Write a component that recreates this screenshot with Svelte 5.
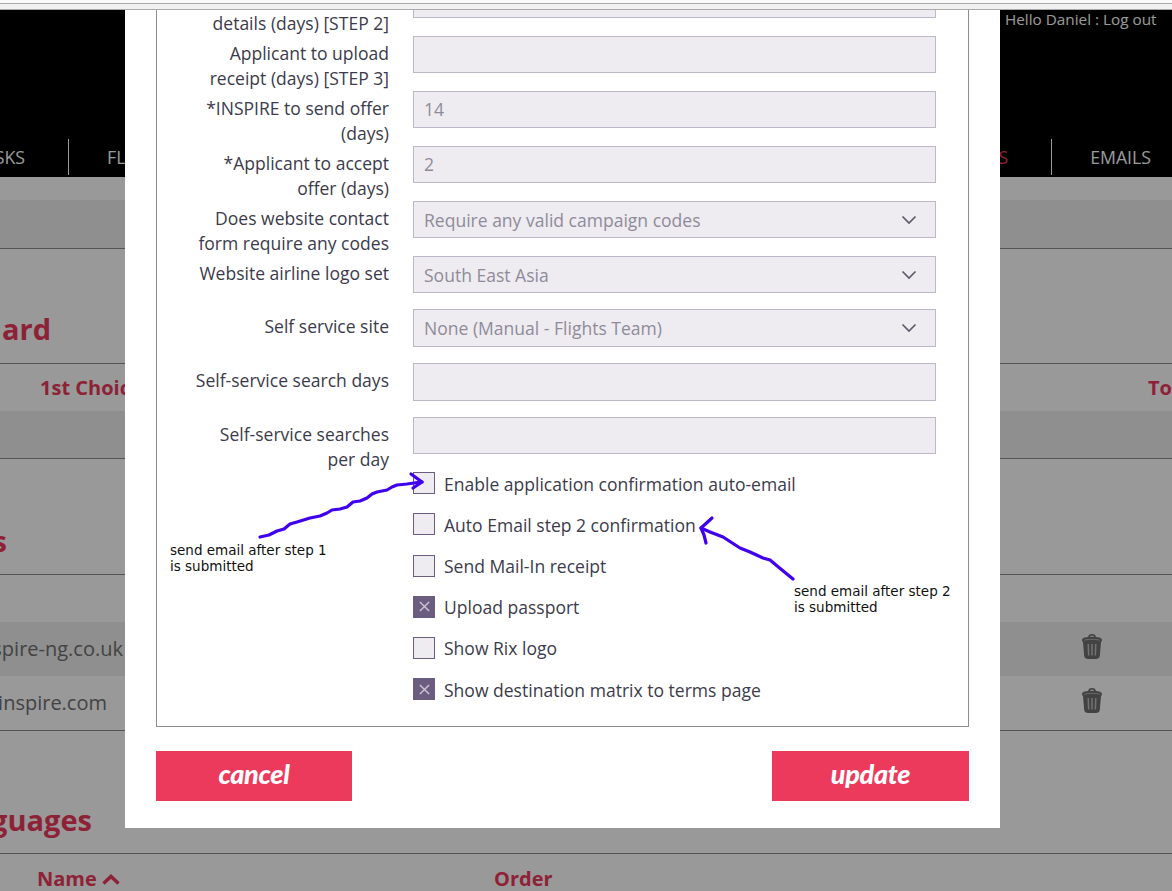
<script>
  const textRows = [
    { label: 'Applicant to provide details (days) [STEP 2]', value: '' },
    { label: 'Applicant to upload receipt (days) [STEP 3]', value: '' },
    { label: '*INSPIRE to send offer (days)', value: '14' },
    { label: '*Applicant to accept offer (days)', value: '2' }
  ];
  const checks = [
    { label: 'Enable application confirmation auto-email', on: false },
    { label: 'Auto Email step 2 confirmation', on: false },
    { label: 'Send Mail-In receipt', on: false },
    { label: 'Upload passport', on: true },
    { label: 'Show Rix logo', on: false },
    { label: 'Show destination matrix to terms page', on: true }
  ];
</script>

{#snippet trash()}
  <svg class="trash" viewBox="0 0 20 25" aria-hidden="true">
    <path d="M7 3.2C7 1.4 8.3.8 10 .8s3 .6 3 2.4" fill="none" stroke="currentColor" stroke-width="1.6" />
    <path d="M0 6.2C0 3.8 4 2.8 10 2.8s10 1 10 3.4c0 .8-.4 1.4-1 1.8L17.8 22c-.2 2-2 3-3.8 3H6c-1.8 0-3.6-1-3.800-3L1 8c-.6-.4-1-1-1-1.800z" fill="currentColor" />
    <path d="M2 6.400C4 5 16 5 18 6.400" fill="none" stroke="#fff" stroke-opacity=".45" stroke-width="1" />
    <path d="M6.200 10l.5 11.500M10 10v11.500M13.800 10l-.5 11.500" fill="none" stroke="#fff" stroke-opacity=".55" stroke-width="1.500" />
  </svg>
{/snippet}

{#snippet selectField(value, tall)}
  <div class="select-wrap">
    <select class="field" class:tall><option>{value}</option></select>
    <svg class="chev" viewBox="0 0 16 10" aria-hidden="true"><path d="M1.500 1.500 8 8l6.500-6.500" fill="none" stroke="#5d5b69" stroke-width="1.700" /></svg>
  </div>
{/snippet}

<div class="root">
  <div class="strip"></div>
  <div class="viewport">
    <header class="head">
      <div class="hello">Hello Daniel : Log out</div>
      <nav class="nav">
        <div class="nav-first"><span>TASKS</span></div>
        <div class="nav-item">FLIGHTS</div>
        <div class="nav-item active">CAMPAIGNS</div>
        <div class="nav-item last">EMAILS</div>
      </nav>
    </header>

    <div class="band ruled"></div>

    <h2 class="title t1"><span>ard</span></h2>
    <div class="cols cols-a ruled-top"><b>1st Choice</b><b>Total</b></div>
    <div class="band short ruled"></div>

    <h2 class="title t2"><span>Emails</span></h2>
    <div class="cols empty ruled-top"></div>
    <div class="row stripe"><span class="addr"><span>admin@inspire-ng.co.uk</span></span>{@render trash()}</div>
    <div class="row ruled"><span class="addr two"><span>info@inspire.com</span></span>{@render trash()}</div>

    <h2 class="title t3"><span>Languages</span></h2>
    <div class="cols cols-b ruled-top">
      <b class="name">Name<svg viewBox="0 0 18 11" aria-hidden="true"><path d="M1.500 9.500 9 2.500l7.500 7" fill="none" stroke="currentColor" stroke-width="3.500" /></svg></b>
      <b>Order</b>
    </div>

    <div class="overlay"></div>

    <div class="modal">
      <form class="panel">
        {#each textRows as r}
          <div class="frow">
            <label class="lab">{r.label}</label>
            <input class="field" value={r.value} />
          </div>
        {/each}
        <div class="frow">
          <label class="lab">Does website contact form require any codes</label>
          {@render selectField('Require any valid campaign codes', false)}
        </div>
        <div class="frow">
          <label class="lab">Website airline logo set</label>
          {@render selectField('South East Asia', false)}
        </div>
        <div class="frow">
          <label class="lab">Self service site</label>
          {@render selectField('None (Manual - Flights Team)', true)}
        </div>
        <div class="frow">
          <label class="lab">Self-service search days</label>
          <input class="field tall" />
        </div>
        <div class="frow">
          <label class="lab">Self-service searches per day</label>
          <input class="field" />
        </div>
        <div class="checks">
          {#each checks as c}
            <div class="check">
              <span class="box" class:on={c.on}>
                {#if c.on}
                  <svg viewBox="0 0 12 12" aria-hidden="true"><path d="M1 1l10 10M11 1 1 11" stroke="#c9c5d3" stroke-width="1.600" fill="none" /></svg>
                {/if}
              </span>
              <span class="check-text">{c.label}</span>
            </div>
          {/each}
        </div>
      </form>
      <div class="actions">
        <button type="button" class="btn">cancel</button>
        <button type="button" class="btn">update</button>
      </div>
    </div>
  </div>

  <svg class="ink" viewBox="0 0 1172 891" aria-hidden="true">
    <polyline points="260,537 269,535 277,531 284,529 290,524 297,522 310,518 320,516 327,513 332,510 340,509 347,507 353,502 360,501 367,498 372,494 377,492 387,490 392,487 397,485 407,484 414,483 422,482" />
    <polyline points="411,474 422,482 413,488" />
    <polyline points="793,579 782,570 770,560 763,558 750,552 740,548 723,537 710,532 701,528" />
    <polyline points="712,518 701,528 704,535 706,543" />
  </svg>
  <div class="note n1">send email after step 1<br />is submitted</div>
  <div class="note n2">send email after step 2<br />is submitted</div>
</div>

<style>
  :global(body) { margin: 0; background: #fff; }
  .root {
    position: relative; width: 1172px; height: 891px; overflow: hidden;
    font-family: "Open Sans", sans-serif; color: #3c3b4b;
  }
  .strip {
    height: 10px; box-sizing: border-box; background: #f1f1f1;
    border-top: 3px solid #fafafa; border-bottom: 1px solid #aaa; position: relative;
  }
  .strip::before { content: ""; display: block; height: 1px; background: #aaa; }
  .viewport { position: relative; height: 881px; overflow: hidden; background: #fff; }

  .head { position: relative; height: 167px; background: #000; display: flex; flex-direction: column; justify-content: flex-end; }
  .hello { position: absolute; top: 0; left: 1005px; font-size: 15.300px; line-height: 18px; color: #fff; white-space: nowrap; }
  .nav { display: flex; height: 38px; color: #fff; font-size: 17.700px; line-height: 36px; }
  .nav-first { width: 68px; flex: none; display: flex; justify-content: flex-end; height: 36px; border-right: 1px solid #fff; padding-right: 43px; box-sizing: content-box; margin-left: -43px; }
  .nav-item { padding: 0 38px; height: 36px; white-space: nowrap; }
  .nav-item.active { margin-left: auto; color: #ec3a5d; padding-right: 43px; }
  .nav-item.last { border-left: 1px solid #fff; padding-right: 21px; }

  .band { height: 48px; background: #eee; }
  .band.short { height: 47px; }
  .head + .band { margin-top: 23px; }
  .ruled { border-bottom: 1px solid #8e8e8e; }
  .ruled-top { border-top: 1px solid #8e8e8e; }

  .title { margin: 0; width: 51px; display: flex; justify-content: flex-end; font-size: 29px; line-height: 40px; font-weight: 700; color: #ec3a5d; white-space: nowrap; }
  .t1 { margin-top: 60px; margin-bottom: 14px; }
  .t2 { margin-top: 62px; margin-bottom: 13px; width: 7px; }
  .t3 { margin-top: 69px; margin-bottom: 13px; width: 92px; }

  .cols { height: 47px; font-size: 20px; line-height: 47px; color: #ec3a5d; white-space: nowrap; display: grid; }
  .cols b { font-weight: 700; }
  .cols-a { grid-template-columns: 1108px 100px; padding-left: 40px; }
  .cols-b { grid-template-columns: 457px 1fr; padding-left: 37px; line-height: 49px; }
  .name { display: flex; align-items: center; gap: 5px; height: 49px; }
  .name svg { width: 18px; height: 11px; margin-top: 2px; }

  .row { height: 54px; display: flex; align-items: center; font-size: 20px; color: #707070; position: relative; }
  .stripe { background: #eee; }
  .addr { width: 123px; display: flex; justify-content: flex-end; white-space: nowrap; margin-top: -2px; }
  .addr.two { width: 107px; }
  .trash { width: 20px; height: 25px; position: absolute; left: 1082px; top: 12px; color: #6f6f6f; }

  .overlay { position: absolute; inset: 0; background: rgba(0, 0, 0, .4); }

  .modal { position: absolute; left: 125px; top: 0; width: 875px; height: 818px; background: #fff; overflow: hidden; box-sizing: border-box; padding: 0 31px; }
  .panel { margin-top: -30px; height: 747px; box-sizing: border-box; border: 1px solid #8e8b96; padding: 0 32px 0 0; }
  .frow { display: grid; grid-template-columns: 232px 523px; column-gap: 24px; align-items: start; }
  .lab { font-size: 17.550px; line-height: 25px; padding: 5px 0 0 36px; text-align: right; display: block; }
  .field {
    display: block; width: 100%; height: 37px; margin: 0 0 16px; box-sizing: border-box;
    background: #eeecf1; border: 1px solid #bdb9c9; border-radius: 0; padding: 0 10px;
    font: 17.550px "Open Sans", sans-serif; color: #8f8b99; appearance: none; outline: none;
  }
  .field.tall { height: 38px; }
  input.field { padding-bottom: 2px; }
  .select-wrap { position: relative; }
  .chev { position: absolute; right: 19px; top: 14px; width: 16px; height: 10px; }

  .checks { margin: -9.400px 0 0 256px; }
  .check { display: flex; align-items: center; gap: 9px; height: 41.200px; font-size: 17.550px; line-height: 25px; white-space: nowrap; }
  .check-text { padding-top: 2px; }
  .box { width: 22px; height: 22px; flex: none; box-sizing: border-box; background: #eeecf1; border: 1px solid #6a5d80; display: flex; align-items: center; justify-content: center; }
  .box.on { background: #6a5d80; }
  .box svg { width: 11px; height: 11px; }

  .actions { display: flex; justify-content: space-between; margin-top: 24px; }
  .btn {
    width: 196px; height: 50px; border: 0; padding: 0 0 5px; background: #ec3a5d; color: #fff;
    font: italic 900 27px Lato, sans-serif; letter-spacing: -.3px;
  }
  .btn + .btn { width: 197px; }

  .ink { position: absolute; inset: 0; width: 1172px; height: 891px; pointer-events: none; }
  .ink polyline { fill: none; stroke: #3f00ee; stroke-width: 3.200; stroke-linejoin: round; stroke-linecap: round; }
  .note { position: absolute; font: 13.500px/16px "DejaVu Sans", sans-serif; color: #111; white-space: nowrap; }
  .n1 { left: 170px; top: 542px; }
  .n2 { left: 794px; top: 583px; }
</style>
